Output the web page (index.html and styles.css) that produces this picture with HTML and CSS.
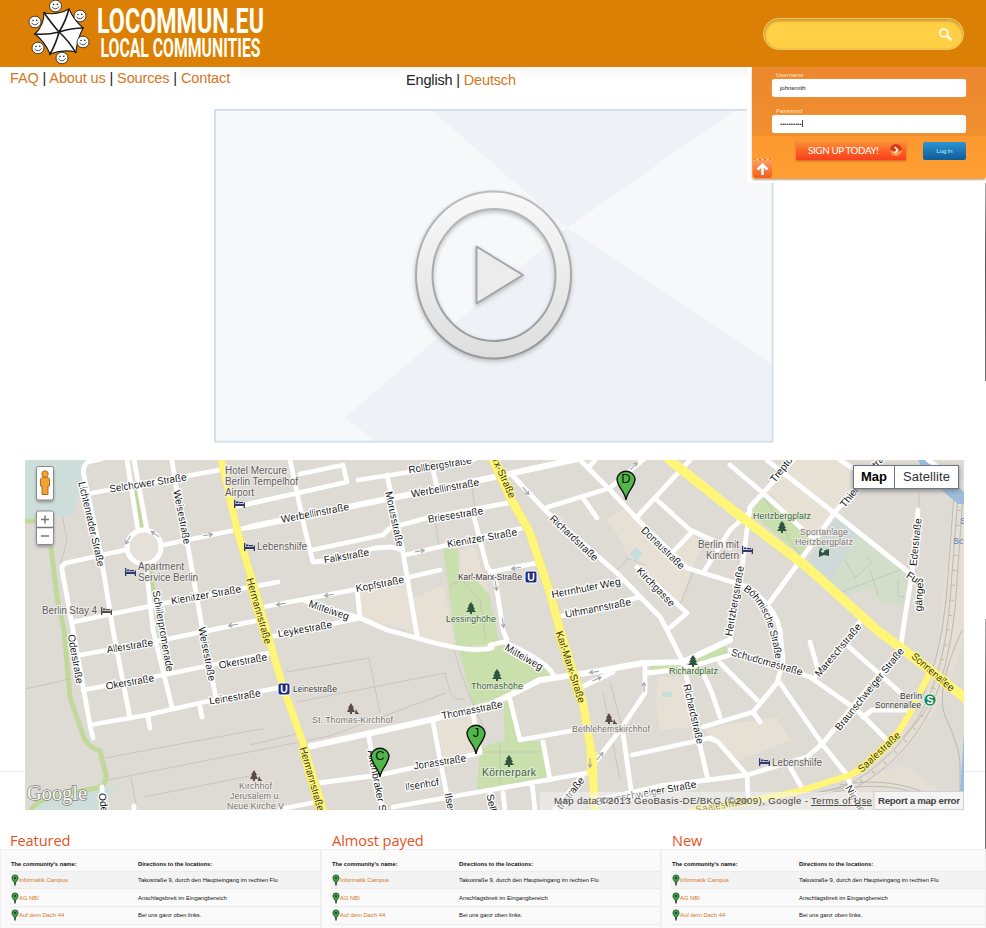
FILE: index.html
```html
<!DOCTYPE html>
<html lang="en">
<head>
<meta charset="utf-8">
<title>Locommun.eu – Local Communities</title>
<link rel="stylesheet" href="styles.css">
</head>
<body>
<svg width="0" height="0" class="defs" aria-hidden="true">
  <defs>
    <symbol id="face" viewBox="-7 -7 14 14"><ellipse rx="6" ry="5.8" fill="#fff" stroke="#222" stroke-width=".8"/><circle cx="-2" cy="-1.5" r=".7"/><circle cx="1.8" cy="-1.8" r=".7"/><path d="M-3.5 1Q.5 5 3.6.4" fill="none" stroke="#222" stroke-width=".8"/></symbol>
    <symbol id="pin" viewBox="-11 -32 22 33"><path d="M0 0C-1-9-9-13-9-21.5A9.2 9.2 0 0 1 9-21.5C9-13 1-9 0 0Z" fill="#4fb848" stroke="#111" stroke-width="1.4"/></symbol>
    <symbol id="minipin" viewBox="0 0 8 12"><path d="M4 11.5V7" stroke="#222" stroke-width="1.3"/><path d="M4 10C3.500 7.500.9 6.500.9 4A3.100 3.100 0 0 1 7.100 4C7.100 6.500 4.500 7.500 4 10Z" fill="#3f9f45" stroke="#1f4a24" stroke-width=".8"/><circle cx="4" cy="4" r=".9" fill="#123"/></symbol>
    <symbol id="tree" viewBox="-5 -6 10 12"><path d="M0-6L3-2H2L4 1H2.500L5 4H1V6H-1V4H-5L-2.500 1H-4L-2-2H-3Z"/></symbol>
    <symbol id="yard" viewBox="-5 -6 12 12"><path d="M-1-6L2-1H1L3 3H0V5H-2V3H-5L-3-1H-4ZM4 0L6 4H7V5H3V4Z"/></symbol>
    <symbol id="bed" viewBox="0 0 11 8"><path d="M0 0H1.300V4H9.700V2.500H11V8H9.700V6H1.300V8H0ZM2 1.500H4.500V3.200H2ZM5 2H9V3.200H5Z"/></symbol>
    <symbol id="arrow" viewBox="-6 -3 12 6"><path d="M-5 0H4M1-2L4.500 0L1 2" fill="none" stroke="#a3a6ab" stroke-width="1.1"/></symbol>
    <linearGradient id="ring" x2="0" y2="1"><stop stop-color="#f9f9f9"/><stop offset="1" stop-color="#dededf"/></linearGradient>
    <linearGradient id="rim" x2="0" y2="1"><stop stop-color="#bcbcbc"/><stop offset="1" stop-color="#96989a"/></linearGradient>
  </defs>
</svg>

<header class="top">
  <svg class="logo" width="240" height="67" viewBox="28 0 240 67">
    <path d="M44 13Q57 15.500 69 9Q74 20 83 28Q77 40 76 52Q63 49 50 54Q45 42 35 34Q44 25 44 13Z" fill="#fff" stroke="#1b1b1b" stroke-width="1.100"/>
    <path d="M43.500 12Q52 24 59 32Q66 21 69 8.500M84 28Q71 28 59 32Q69 41 76 53M49.500 55Q56 44 59 32Q48 35 34 34" fill="none" stroke="#1b1b1b" stroke-width="1.600"/>
    <use href="#face" x="48.500" y="-1" width="14" height="14"/><use href="#face" x="73" y="9" width="14" height="14"/><use href="#face" x="76" y="35" width="14" height="14"/><use href="#face" x="55" y="51" width="14" height="14"/><use href="#face" x="31" y="41" width="14" height="14"/><use href="#face" x="28" y="15" width="14" height="14"/>
    <text class="brand" x="97" y="33" font-size="34.500" textLength="167" lengthAdjust="spacingAndGlyphs">LOCOMMUN.EU</text>
    <text class="brand" x="100.500" y="57" font-size="25" textLength="160" lengthAdjust="spacingAndGlyphs">LOCAL COMMUNITIES</text>
  </svg>
  <div class="search"><svg width="16" height="16" viewBox="0 0 16 16"><circle cx="6.800" cy="6" r="4" fill="none" stroke="#fff8dc" stroke-width="2"/><path d="M9.800 8.700L14.500 13.200" stroke="#fff8dc" stroke-width="2.600"/></svg></div>
</header>

<div class="subbar">
  <nav class="menu"><a>FAQ</a> | <a>About us</a> | <a>Sources</a> | <a>Contact</a></nav>
  <div class="lang">English | <a>Deutsch</a></div>
</div>

<section class="login">
  <div class="panel">
    <label>Username</label><div class="field">johnsmith</div>
    <label>Password</label><div class="field dots">••••••••••<i></i></div>
    <div class="actions">
      <div class="signup"><span>SIGN UP TODAY!</span><svg width="12" height="12" viewBox="0 0 12 12"><circle cx="6" cy="6" r="6" fill="#d93a13"/><path d="M0 6A6 6 0 0 0 12 6Q6 9 0 6" fill="#ff9a4d"/><path d="M4.800 3L7.600 6L4.800 9" fill="none" stroke="#fff" stroke-width="1.700"/></svg></div>
      <div class="enter">Log In</div>
    </div>
    <div class="up"><svg width="19" height="19" viewBox="0 0 19 19"><path d="M9.500 15V5M4.500 9.500L9.500 4.700L14.500 9.500" fill="none" stroke="#fff" stroke-width="2.600"/></svg></div>
  </div>
</section>

<main>
  <svg class="video" width="560" height="335" viewBox="214 109 560 335">
    <rect x="215" y="110" width="558" height="332" fill="#eef2f7"/>
    <path d="M215 110H431L567 228L344 418L378 442H215ZM735 110L567 228L773 365V110Z" fill="#f6f8fa"/>
    <rect x="215" y="110" width="557.500" height="331.700" fill="none" stroke="#d6e0e8" stroke-width="2"/>
    <g class="play"><path fill-rule="evenodd" d="M416 275A77.500 83.500 0 0 1 571 275A77.500 83.500 0 0 1 416 275ZM432.500 275A61.500 66 0 0 0 555.500 275A61.500 66 0 0 0 432.500 275Z" fill="url(#ring)" stroke="url(#rim)" stroke-width="2"/>
    <path d="M476.500 246.500V303.500L523 275Z" fill="#ececec" stroke="#a4a6a8" stroke-width="2" stroke-linejoin="round"/></g>
  </svg>

  <svg class="map" width="939" height="350" viewBox="25 460 939 350">
    <rect x="25" y="460" width="939" height="350" fill="#dedad4"/>
    <!-- open ground -->
    <g fill="#e6e1d4">
      <path d="M357 590L405 582L417 633L360 618ZM413 598L443 585L455 640L450 648L417 638ZM460 550L474 546L489 592L459 575Z"/>
      <path d="M436 722L474 714L480 750L443 758ZM605 520L623 510L677 553L693 535L703 545L690 572L680 605L640 565L630 560L617 533Z"/>
      <path d="M767 490L797 460H842L873 470L833 512L813 540ZM657 677L683 677L690 727L660 730L656 705ZM705 730L730 724L777 717L790 740L740 760L712 740Z"/>
      <path d="M938 640L955 480H964V640L948 690L915 740L890 765L855 778L905 765L940 790L964 795V810H760L830 790L880 765L925 700Z" fill-opacity=".65"/>
    </g>
    <g fill="#c9dfac">
      <path d="M443 548L458 549L459 573L475 578L489 595L500 645H456L449 590ZM456 640L490 652L502 642L553 675L513 693L473 705ZM503 703L512 700L518 740L542 742L550 777L477 790L480 748L505 740Z"/>
      <path d="M762 497L813 537L800 555L752 513ZM650 665L683 664V669L650 670ZM690 662L725 644L728 653L692 667Z"/>
    </g>
    <path d="M858 533L909 575L904 606L884 602L868 588L848 595L828 583Z" fill="#d2dec9"/>
    <path d="M837 515L859 533L829 583L806 564Z" fill="#cfd9d8"/>
    <path d="M25 460H88L73 515L25 522ZM27 810Q45 792 83 793Q102 785 118 787L108 797L96 810Z" fill="#cedfdb"/>
    <path d="M636 547L643 554L637 561L630 554ZM662 692H672V697H662Z" fill="#c4dddd"/>
    <path d="M918 460H930L964 492V504H958L928 478ZM964 733V792H960Z" fill="#98bce2"/>
    <g fill="none" stroke="#c0d99a" stroke-width="5"><path d="M51 547L57 597L64 630L70 697L84 738Q88 747 100 751L106 775Q106 786 97 788L60 795Q36 799 30 812"/><path d="M25 521H35M134 489L141 528M149 568L160 630L168 672"/></g>
    <!-- footpaths and plot lines -->
    <g fill="none" stroke="#c3c0ba" stroke-width=".8">
      <path d="M25 689L70 679M105 758L250 731L263 729M108 780L330 736L446 693M144 797L250 776M131 777L136 805M250 745L300 733M286 672L369 658L380 713M297 702L445 673L450 692Q453 701 464 699M62 515L67 540L61 563M472 487L475 510M435 520L439 548M454 650Q465 690 485 730M603 692L620 780M610 682L622 727M693 572L680 605M617 570L628 558L645 565"/>
      <path d="M842 592L907 567M870 570L878 595M845 560L855 578L872 562L867 556M898 580V596L904 597M919 490V520M764 497L790 540L800 555M485 752H540M500 745V785M450 585L462 580L480 600L486 640"/>
    </g>
    <g fill="none" stroke="#bbbab6" stroke-width="1">
      <path d="M958 495L950 600Q945 665 925 705Q900 755 850 784Q820 795 740 803"/><path d="M963 495L955 610Q948 670 930 710Q905 760 855 788L760 806"/><path d="M954 495L946 600Q940 660 921 700"/><path d="M962 630Q935 690 945 716Q960 748 960 763V795M840 785Q890 776 930 795M820 792Q880 780 915 793M870 760Q915 735 934 695"/>
      <path stroke-dasharray="1 14" stroke-width="4" d="M960 495L952 600Q945 665 925 710Q900 760 850 788"/>
    </g>
    <!-- streets -->
    <g class="road">
      <path d="M101 459L88 462Q82 466 84 476L100 550L113 630L130 718M92 493L220 470M127 460L138 530M134 460L147 530M172 460L177 493L188 547L202 627L216 698M163 545L250 527M125 550L66 563Q61 565 62 570L73 630L90 725L93 738M73 622L170 602L278 582M146 565L153 630L164 675L172 707M80 655L153 642L260 620M83 690L153 677L270 653M90 725L147 715L213 700L283 687M148 717L150 728M200 707L202 717M102 787L103 812M134 806V812"/>
      <path d="M263 607L353 590L440 570M270 637L360 618M305 601L360 618L387 630L417 638Q470 654 492 648M357 590L360 617M290 460L305 530L313 562L325 561L375 548L392 547L402 550M312 550L383 535L390 528L427 518L513 502M405 555L490 535L523 528M358 480L410 472L475 459M235 507L347 482L343 465L300 474M387 475L402 547L417 635M433 470L437 487M473 513L487 567L495 577L503 630L507 640M490 572L537 563M490 645L504 642Q545 660 553 674"/>
      <path d="M512 475L548 513L617 573L660 617L667 630L683 662L690 693L698 737L708 780M580 460L610 490L640 522L687 568L745 586Q775 605 780 630L783 660L777 683L753 712L703 727M548 507L610 488L645 458M583 498L597 518M595 460L590 466M637 517L690 460M657 500L690 530L730 548M673 552L692 532M763 493L750 507L743 560L730 640M703 573L730 530L750 512M763 493L793 460M730 465L763 493L812 538M767 460L833 512L912 575M876 467L835 512L797 565L770 602M840 460L852 468M928 460L945 472M918 510L912 573L903 630L900 652M637 567L687 613L667 630M553 597L620 583M558 617L640 597"/>
      <path d="M582 687L613 672M645 667V693L620 730L597 760M647 673L683 669L730 655M623 733L632 797M587 728L520 740L510 700M543 742L550 780M632 755L710 738L718 742L747 775L748 795M393 807L490 790L592 772M597 800L660 786L747 775L807 757L823 743L877 677L903 650M532 783L535 810M503 793L505 810M553 812L583 775M703 673L712 693L720 717M720 663L757 700M730 650L810 677L857 710L887 740M810 642L818 670M815 677L863 618M847 645L903 695M863 717L872 710H907M780 683L823 745L847 775L860 812M753 712L760 722M790 767L802 788M318 783L380 775L480 753L473 713M368 733L383 812M433 722L450 812M490 790L493 812M280 809L317 802"/>
      <path class="wide" d="M250 527L397 497L490 478L577 459M307 747L430 720L490 705L540 680L593 672L643 663L683 662L730 640"/>
    </g>
    <circle cx="144" cy="547" r="17" fill="#e6e1d8" stroke="#fff" stroke-width="5"/>
    <g fill="none" stroke="#f3e58a" stroke-linejoin="round"><path stroke-width="8" d="M221 458L237 530L253 583L283 687L303 743L324 812"/><path stroke-width="9" d="M492 458L510 497L530 533L550 593L560 630L583 703L592 757L595 812"/></g>
    <g fill="none" stroke="#fff678" stroke-linejoin="round"><path stroke-width="6.500" d="M221 458L237 530L253 583L283 687L303 743L324 812M931 670L910 713Q885 758 850 775L797 792L690 812"/><path stroke-width="7.500" d="M492 458L510 497L530 533L550 593L560 630L583 703L592 757L595 812"/><path stroke-width="10" d="M592 752V776"/><path stroke-width="9.500" d="M666 457L730 508L807 567L877 630L917 660L970 702"/></g>
    <use href="#arrow" x="-6" y="-3" width="12" height="6" transform="translate(208 535) rotate(-8)"/><use href="#arrow" x="-6" y="-3" width="12" height="6" transform="translate(233 625) rotate(171)"/><use href="#arrow" x="-6" y="-3" width="12" height="6" transform="translate(281 604) rotate(171)"/><use href="#arrow" x="-6" y="-3" width="12" height="6" transform="translate(329 595) rotate(171)"/><use href="#arrow" x="-6" y="-3" width="12" height="6" transform="translate(420 551) rotate(-10)"/><use href="#arrow" x="-6" y="-3" width="12" height="6" transform="translate(526 491) rotate(50)"/><use href="#arrow" x="-6" y="-3" width="12" height="6" transform="translate(516 568) rotate(171)"/><use href="#arrow" x="-6" y="-3" width="12" height="6" transform="translate(496 586) rotate(80)"/><use href="#arrow" x="-6" y="-3" width="12" height="6" transform="translate(503 623) rotate(80)"/><use href="#arrow" x="-6" y="-3" width="12" height="6" transform="translate(594 672) rotate(173)"/><use href="#arrow" x="-6" y="-3" width="12" height="6" transform="translate(597 679) rotate(-25)"/><use href="#arrow" x="-6" y="-3" width="12" height="6" transform="translate(644 687) rotate(-90)"/><use href="#arrow" x="-6" y="-3" width="12" height="6" transform="translate(600 756) rotate(-50)"/><use href="#arrow" x="-6" y="-3" width="12" height="6" transform="translate(590 763) rotate(90)"/><use href="#arrow" x="-6" y="-3" width="12" height="6" transform="translate(128 540) rotate(120)"/><use href="#arrow" x="-6" y="-3" width="12" height="6" transform="translate(155 534) rotate(215)"/><use href="#arrow" x="-6" y="-3" width="12" height="6" transform="translate(634 466) rotate(-45)"/>

    <!-- street names -->
    <g class="st">
      <text transform="translate(148 483) rotate(-9)" y="3.500" textLength="78">Selchower Straße</text>
      <text transform="translate(91.500 524) rotate(77)" y="3.500" textLength="87">Lichtenrader Straße</text>
      <text transform="translate(182 517) rotate(79)" y="3.500" textLength="55">Weisestraße</text>
      <text transform="translate(206 595) rotate(-10)" y="3.500" textLength="71">Kienitzer Straße</text>
      <text transform="translate(163 631) rotate(80)" y="3.500" textLength="82">Schillerpromenade</text>
      <text transform="translate(207 654) rotate(79)" y="3.500" textLength="55">Weisestraße</text>
      <text transform="translate(75.500 659) rotate(80)" y="3.500" textLength="50">Oderstraße</text>
      <text transform="translate(130 646) rotate(-9)" y="3.500" textLength="47">Allerstraße</text>
      <text transform="translate(130 682) rotate(-10)" y="3.500" textLength="49">Okerstraße</text>
      <text transform="translate(243 661) rotate(-10)" y="3.500" textLength="49">Okerstraße</text>
      <text transform="translate(235 697) rotate(-9)" y="3.500" textLength="52">Leinestraße</text>
      <text transform="translate(315 513) rotate(-11)" y="3.500" textLength="69">Werbellinstraße</text>
      <text transform="translate(445 488) rotate(-10)" y="3.500" textLength="69">Werbellinstraße</text>
      <text transform="translate(440 465) rotate(-9)" y="3.500" textLength="64">Rollbergstraße</text>
      <text transform="translate(455.500 515) rotate(-9)" y="3.500" textLength="56">Briesestraße</text>
      <text transform="translate(482 538) rotate(-10)" y="3.500" textLength="71">Kienitzer Straße</text>
      <text transform="translate(394.500 519) rotate(78)" y="3.500" textLength="56">Morusstraße</text>
      <text transform="translate(346.500 556) rotate(-10)" y="3.500" textLength="46">Falkstraße</text>
      <text transform="translate(380 584) rotate(-11)" y="3.500" textLength="49">Kopfstraße</text>
      <text transform="translate(329 610) rotate(19)" y="3.500" textLength="42">Mittelweg</text>
      <text transform="translate(305 629) rotate(-10)" y="3.500" textLength="55">Leykestraße</text>
      <text transform="translate(574 538) rotate(43)" y="3.500" textLength="62">Richardstraße</text>
      <text transform="translate(663 548) rotate(44)" y="3.500" textLength="56">Donaustraße</text>
      <text transform="translate(656 587) rotate(46)" y="3.500" textLength="50">Kirchgasse</text>
      <text transform="translate(586 588) rotate(-11)" y="3.500" textLength="70">Herrnhuter Weg</text>
      <text transform="translate(598 608) rotate(-11)" y="3.500" textLength="67">Uthmannstraße</text>
      <text class="from" transform="translate(772 481) rotate(-51)" y="3.500">Treptower Straße</text>
      <text class="from" transform="translate(842 506) rotate(-51)" y="3.500">Thiemannstraße</text>
      <text transform="translate(915.500 542) rotate(-84)" y="3.500" textLength="48">Ederstraße</text>
      <text transform="translate(915 579) rotate(33)" y="3.500">Fuß</text><text transform="translate(919 597) rotate(-87)" y="3.500">gänge</text>
      <text transform="translate(734.500 601) rotate(-80)" y="3.500" textLength="71">Hertzbergstraße</text>
      <path id="bohm" d="M743 590Q770 608 776 665" fill="none" stroke="none"/>
      <text class="from"><textPath href="#bohm">Böhmische Straße</textPath></text>
      <text transform="translate(767 662) rotate(16)" y="3.500" textLength="74">Schudomastraße</text>
      <text transform="translate(838 650) rotate(-50)" y="3.500" textLength="66">Mareschstraße</text>
      <text transform="translate(869.500 689) rotate(-51)" y="3.500" textLength="103">Braunschweiger Straße</text>
      <text transform="translate(693.500 714) rotate(77)" y="3.500" textLength="61">Richardstraße</text>
      <text transform="translate(524 657) rotate(30)" y="3.500" textLength="42">Mittelweg</text>
      <text transform="translate(472 710) rotate(-11)" y="3.500" textLength="62">Thomasstraße</text>
      <text transform="translate(440 762) rotate(-9)" y="3.500" textLength="53">Jonasstraße</text>
      <text transform="translate(422 784.500) rotate(-9)" y="3.500" textLength="34">Ilsenhof</text>
      <text class="from" transform="translate(371 750) rotate(79)" y="3.500">Altenbraker Straße</text>
      <text class="from" transform="translate(448 793) rotate(79)" y="3.500">Ilsestraße</text>
      <text class="from" transform="translate(490 794) rotate(79)" y="3.500">Selkestraße</text>
      <text class="from" transform="translate(102 793) rotate(82)" y="3.500">Oderstraße</text>
      <text class="from" transform="translate(559 808) rotate(-52)" y="3.500">thstraße</text>
      <text class="from" transform="translate(848 786) rotate(60)" y="3.500">Niemetzstraße</text>
      <text transform="translate(646 793) rotate(-10)" y="3.500" textLength="102">Braunschweiger Straße</text>
      <g class="main">
        <text transform="translate(259 611) rotate(74)" y="3.500" textLength="68">Hermannstraße</text>
        <text transform="translate(312 779) rotate(74)" y="3.500" textLength="66">Hermannstraße</text>
        <text transform="translate(497 462) rotate(66)" y="3.500" textLength="78">Karl-Marx-Straße</text>
        <text transform="translate(570.500 667) rotate(72)" y="3.500" textLength="75">Karl-Marx-Straße</text>
        <text transform="translate(933 672) rotate(41)" y="3.500" textLength="53">Sonnenallee</text>
        <text transform="translate(879 752) rotate(-43)" y="3.500" textLength="54">Saalestraße</text>
        <text transform="translate(722 805) rotate(-10)" y="3.500" textLength="54">Saalestraße</text>
      </g>
    </g>
    <!-- places -->
    <g class="poi">
      <text x="225" y="473.500" textLength="62">Hotel Mercure</text><text x="225" y="484.500" textLength="73">Berlin Tempelhof</text><text x="225" y="495.500" textLength="29">Airport</text>
      <text x="138" y="569.500" textLength="46">Apartment</text><text x="138" y="580.500" textLength="60">Service Berlin</text><text x="257" y="549.500" textLength="50">Lebenshilfe</text><text x="42" y="613.500" textLength="55">Berlin Stay 4</text>
      <text x="698" y="547.500" textLength="41">Berlin mit</text><text x="706" y="558.500" textLength="33">Kindern</text><text x="772" y="765.500" textLength="50">Lebenshilfe</text>
      <g class="soft"><text x="800" y="535" textLength="48">Sportanlage</text><text x="795" y="545" textLength="58">Hertzbergplatz</text><text x="312" y="723" textLength="81">St. Thomas-Kirchhof</text><text x="572" y="732" textLength="78">Bethlehemskirchhof</text><text x="239" y="789" textLength="33">Kirchhof</text><text x="230" y="799" textLength="51">Jerusalem u.</text><text x="227" y="809" textLength="57">Neue Kirche V</text></g>
      <g class="green"><text x="753" y="519" textLength="58">Hertzbergplatz</text><text x="446" y="622" textLength="50">Lessinghöhe</text><text x="471" y="689" textLength="52">Thomashöhe</text><text x="669" y="674" textLength="49">Richardplatz</text><text class="big" x="482" y="775.500" textLength="54">Körnerpark</text></g>
      <g class="stop"><text x="458" y="580" textLength="64">Karl-Marx-Straße</text><text x="293" y="692" textLength="44">Leinestraße</text><text x="900" y="699" textLength="22">Berlin</text><text x="875" y="708" textLength="46">Sonnenallee</text></g>
    </g>
    <g class="blue"><text x="960" y="524">S</text><text x="953" y="544">Sc</text></g>
    <g fill="#303a6e"><use href="#bed" x="234" y="500" width="11" height="8"/><use href="#bed" x="244" y="543" width="11" height="8"/><use href="#bed" x="125" y="568" width="11" height="8"/><use href="#bed" x="742" y="546" width="11" height="8"/><use href="#bed" x="759" y="758" width="11" height="8"/></g><use href="#bed" x="101" y="607" width="11" height="8" fill="#554f4c"/>
    <g fill="#2f5540"><use href="#tree" x="466" y="602" width="10" height="12"/><use href="#tree" x="492" y="669" width="10" height="12"/><use href="#tree" x="504" y="755" width="10" height="12"/><use href="#tree" x="688" y="655" width="10" height="12"/><use href="#tree" x="777" y="521" width="10" height="12"/><path d="M819 550L823 553L825 550L829 549V556L824 555L819 557Z"/><circle cx="821" cy="549.500" r="1.300"/></g>
    <g fill="#5a4c44"><use href="#yard" x="347" y="703" width="12" height="12"/><use href="#yard" x="605" y="713" width="12" height="12"/><use href="#yard" x="250" y="770" width="12" height="12"/></g>
    <g class="metro"><rect x="525" y="571" width="12" height="12" rx="2"/><text x="531" y="581">U</text><rect x="278" y="683" width="12" height="12" rx="2"/><text x="284" y="693">U</text><circle cx="930" cy="700" r="6.200"/><text x="930" y="704">S</text></g>
    <g class="mark"><use href="#pin" x="615" y="468" width="22" height="33"/><text x="626" y="483">D</text><use href="#pin" x="369" y="745" width="22" height="33"/><text x="380" y="760">C</text><use href="#pin" x="465" y="722" width="22" height="33"/><text x="476" y="737">J</text></g>
    <!-- map controls -->
    <g class="ctl"><rect x="36.500" y="466.500" width="17" height="33.500" rx="2"/><rect x="36.500" y="511" width="17" height="33.500" rx="2"/></g>
    <path d="M37 527.500H53M41 519.500H49M45 515.500V523.500M41 536H49" stroke="#777" stroke-width="1.500"/>
    <g fill="#f2a234" stroke="#a9641a" stroke-width=".9"><path d="M40.500 480Q40.500 477 45 477Q49.500 477 49.500 480V486H48V494.500H42V486H40.500Z"/><circle cx="45" cy="474" r="3.200"/></g>
    <rect x="540" y="792" width="333" height="18" fill="#f5f5f5" fill-opacity=".5"/>
    <rect x="874" y="791.500" width="89.500" height="18" fill="#f4f4f4" stroke="#ccc" stroke-width=".8"/>
    <g class="credit"><text x="554" y="804" textLength="254">Map data ©2013 GeoBasis-DE/BKG (©2009), Google -</text><text x="811" y="804" textLength="61" text-decoration="underline">Terms of Use</text><text x="878" y="804" textLength="82" class="bold">Report a map error</text></g>
    <text class="google" x="27" y="800" textLength="60" lengthAdjust="spacingAndGlyphs">Google</text>
    <g class="types"><rect x="853.500" y="465.500" width="105" height="23"/><path d="M894.500 465V489" stroke="#6b7685"/><text class="bold" x="861" y="481" textLength="26">Map</text><text x="903" y="481" textLength="47">Satellite</text></g>
  </svg>

  <div class="lists">
    <section><h2>Featured</h2><div class="tbl"><div class="row head"><b>The community's name:</b><b>Directions to the locations:</b></div><div class="row alt"><a><svg><use href="#minipin"/></svg>Informatik Campus</a><span>Takustraße 9, durch den Haupteingang im rechten Flu</span></div><div class="row"><a><svg><use href="#minipin"/></svg>AG NBI</a><span>Anschlagsbrett im Eingangbereich</span></div><div class="row"><a><svg><use href="#minipin"/></svg>Auf dem Dach 44</a><span>Bei uns ganz oben links.</span></div></div></section>
    <section><h2>Almost payed</h2><div class="tbl"><div class="row head"><b>The community's name:</b><b>Directions to the locations:</b></div><div class="row alt"><a><svg><use href="#minipin"/></svg>Informatik Campus</a><span>Takustraße 9, durch den Haupteingang im rechten Flu</span></div><div class="row"><a><svg><use href="#minipin"/></svg>AG NBI</a><span>Anschlagsbrett im Eingangbereich</span></div><div class="row"><a><svg><use href="#minipin"/></svg>Auf dem Dach 44</a><span>Bei uns ganz oben links.</span></div></div></section>
    <section><h2>New</h2><div class="tbl"><div class="row head"><b>The community's name:</b><b>Directions to the locations:</b></div><div class="row alt"><a><svg><use href="#minipin"/></svg>Informatik Campus</a><span>Takustraße 9, durch den Haupteingang im rechten Flu</span></div><div class="row"><a><svg><use href="#minipin"/></svg>AG NBI</a><span>Anschlagsbrett im Eingangbereich</span></div><div class="row"><a><svg><use href="#minipin"/></svg>Auf dem Dach 44</a><span>Bei uns ganz oben links.</span></div></div></section>
  </div>
</main>
</body>
</html>
```
FILE: styles.css
```css
* { box-sizing: border-box; }
body { margin: 0; width: 986px; height: 928px; overflow: hidden; position: relative; background: linear-gradient(#ececec, #ececec) 0 771px / 100% 1px no-repeat #fff; font-family: "Liberation Sans", Arial, sans-serif; color: #222; }
body::before, body::after { content: ""; position: absolute; right: 0; width: 1px; background: linear-gradient(#aaa, #555 40%, #777); }
body::before { top: 183px; height: 198px; }
body::after { top: 619px; height: 230px; }
.defs { position: absolute; }
a { color: #d4761c; }

.top { height: 67px; background: #db7f05; display: flex; justify-content: space-between; padding: 0 22px 0 28px; }
.logo { display: block; overflow: visible; }
.brand { font-family: Roboto, sans-serif; font-weight: 700; fill: #fffef4; }
.search { width: 201px; height: 32px; margin-top: 18px; border-radius: 16px; background: #ffd045; border: 1px solid #ecc667; box-shadow: inset 0 2px 3px #c8952c, inset 1px 0 2px #d9a535; display: flex; justify-content: flex-end; padding: 8px 10px 0 0; }

.subbar { height: 42px; display: flex; font-size: 14.5px; line-height: 18px; background: linear-gradient(#f4f4f4, #fff 12px); }
.menu { width: 240px; padding: 2px 0 0 10px; white-space: nowrap; background: #fff; letter-spacing: -.12px; }
.lang { margin-left: 161px; padding: 1px 5px 0; margin-top: 3px; height: 22px; background: #fff; white-space: nowrap; letter-spacing: -.16px; }

.login { position: absolute; right: 0; top: 67px; width: 239px; height: 116px; padding-left: 5px; background: #fff; }
.panel { position: relative; height: 112px; padding: 4px 20px 0; background: linear-gradient(#ec872f, #f08f2e 69px, #fc982e 69px, #ff9f33); border-radius: 0 0 3px 3px; box-shadow: 0 1px 2px #aaa; }
.panel label { display: block; height: 8px; margin-left: 4px; font-size: 6px; line-height: 9px; color: #ffe6c0; }
.field { height: 18px; width: 194px; margin-bottom: 9.5px; padding-left: 8px; border-radius: 3px; background: #fff; font-size: 6px; line-height: 18px; color: #111; box-shadow: 0 0 1px #ffe0b0; }
.dots { margin-bottom: 9.5px; font-size: 6.2px; color: #333; }
.dots i { display: inline-block; width: 1px; height: 7px; background: #444; vertical-align: middle; }
.actions { display: flex; justify-content: space-between; padding-left: 24px; }
.signup { width: 110px; height: 20px; display: flex; align-items: center; justify-content: space-between; padding: 0 4px 0 12px; background: linear-gradient(#fd9b3c, #fb6526 50%, #fa3f1f); color: #fff; font: 9.8px Lato, sans-serif; letter-spacing: -.35px; box-shadow: 0 1px 2px #c9681c; white-space: nowrap; margin-top: -2px; }
.enter { width: 43px; height: 18px; border-radius: 2px; background: linear-gradient(#2d93d4, #0c5c96); color: #d5edfb; font-size: 5.8px; line-height: 18px; text-align: center; }
.up { position: absolute; left: 1px; bottom: 1px; width: 19px; height: 19px; border-radius: 3px; background: linear-gradient(#f9a05e, #f15a22); border-top: 1px dashed #fbd0a0; }
.up svg { display: block; }

.video { display: block; margin-left: 214px; }
.play { filter: drop-shadow(0 2px 2px #bbb); }
.map { display: block; margin: 16px 0 0 25px; font-family: "Liberation Sans", sans-serif; }
.road { fill: none; stroke: #fff; stroke-width: 4.8; stroke-linecap: round; stroke-linejoin: round; }
.road .wide { stroke-width: 6; }
.st text { font-size: 10.3px; fill: #151515; text-anchor: middle; stroke: #fff; stroke-width: 2.6px; stroke-linejoin: round; paint-order: stroke; }
.st text.from { text-anchor: start; }
.st textPath { letter-spacing: -.4px; }
.st .main text { stroke: #fff678; fill: #37331b; }
.poi text { font-size: 10px; fill: #5e5b5d; stroke: #eeece8; stroke-width: 2px; paint-order: stroke; }
.poi .soft text { font-size: 9px; fill: #77736e; }
.poi .green text { font-size: 9px; fill: #3f5f4a; stroke: #dfebcf; }
.poi .green .big { font-size: 10.5px; }
.poi .stop text { font-size: 8.7px; fill: #333; }
.blue text { font-size: 9px; fill: #5b82b8; }
.metro rect { fill: #1c2a80; stroke: #fff; }
.metro circle { fill: #17885a; stroke: #fff; }
.metro text { fill: #fff; font-size: 10.5px; font-weight: 700; text-anchor: middle; }
.mark text { font-size: 13px; text-anchor: middle; fill: #111; }
.ctl rect { fill: #fff; stroke: #8a8a8a; filter: drop-shadow(0 2px 1.5px #999); }
.credit text { font-size: 9.7px; fill: #444; }
.bold { font-weight: 700; }
.google { font: 22px "Liberation Serif", serif; fill: #f8f8f8; stroke: #85827d; stroke-width: 1.6px; paint-order: stroke; }
.types rect { fill: #fff; stroke: #6b7685; filter: drop-shadow(0 2px 2px #888); }
.types text { font-size: 13px; fill: #333; }
.types .bold { fill: #000; }

.lists { display: grid; grid-template-columns: 321px 340px 325px; padding-top: 20px; }
.lists h2 { margin: 0; padding-left: 10px; height: 19px; font: 400 14.6px/21px "Open Sans", sans-serif; letter-spacing: -.08px; color: #e3531f; }
.lists section + section h2 { padding-left: 11px; }
.tbl { height: 79px; background: #fafafa; border: 1px solid #efefef; border-bottom: 0; padding-left: 9px; font-size: 5.85px; color: #111; }
.row { display: grid; grid-template-columns: 127px 1fr; height: 17.8px; align-items: center; border-bottom: 1px solid #ececec; white-space: nowrap; }
.row > * { padding-left: 1px; }
.row.head { height: 21.5px; padding-top: 7px; font-size: 5.75px; }
.alt { background: #f3f3f3; }
.row a { display: flex; align-items: center; }
.row svg { width: 8px; height: 12px; }
```
